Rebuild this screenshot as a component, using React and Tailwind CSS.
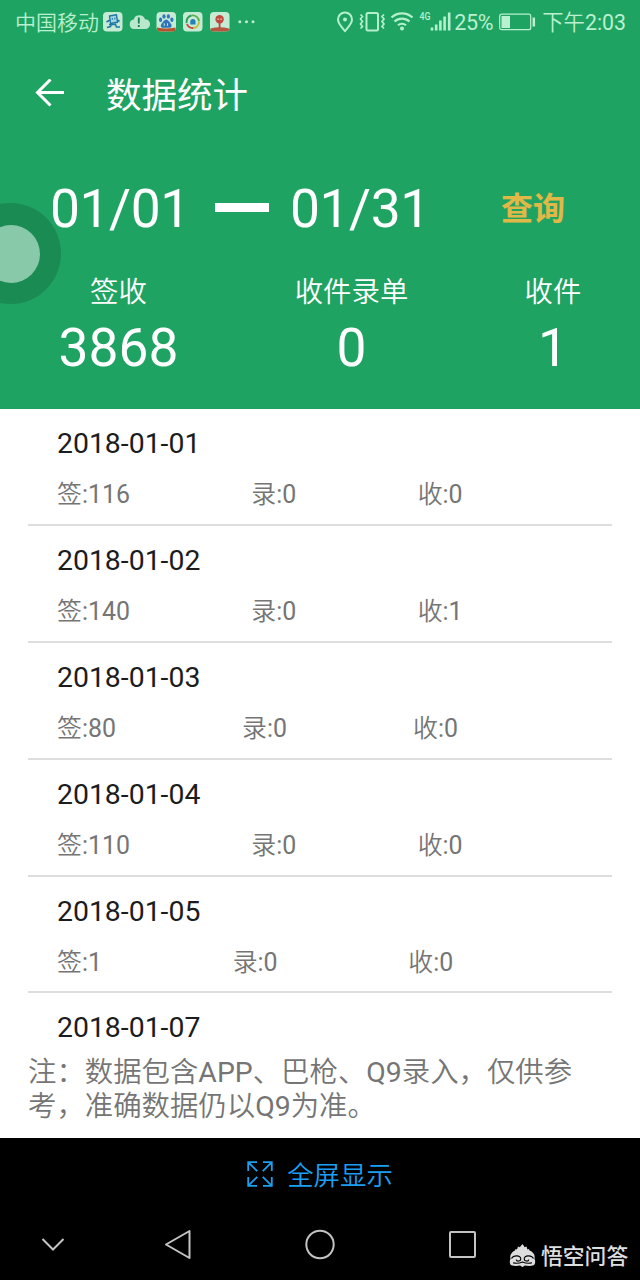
import React from 'react';

const days = [
  { date: '2018-01-01', counts: [116, 0, 0] },
  { date: '2018-01-02', counts: [140, 0, 1] },
  { date: '2018-01-03', counts: [80, 0, 0] },
  { date: '2018-01-04', counts: [110, 0, 0] },
  { date: '2018-01-05', counts: [1, 0, 0] },
  { date: '2018-01-07' },
];

const countLabels = ['签', '录', '收'];

const AppIcons = () => (
  <svg className="ml-[4px] h-[20px] w-[153px] shrink-0" viewBox="0 0 153 20">
    {/* courier */}
    <rect x="0" y="0" width="19.5" height="19.5" rx="4" fill="#c5ebd5" />
    <path d="M6.500 4l7-1.200 1 7.500-7 1.200z" fill="#a5d5de" stroke="#1f78a8" strokeWidth="1.400" strokeLinejoin="round" />
    <path d="M7 8L3.500 10M14.500 8l2 1.500M8.500 11.500l-1 3-3.500 1M12 11.500l1.500 3.500h3.500M6 12.500h7" fill="none" stroke="#1f78a8" strokeWidth="1.600" />
    <path d="M9.300 6v1.800M11.800 5.600v1.800" stroke="#1f78a8" strokeWidth="1" />
    {/* cloud */}
    <path d="M31 17a4.800 4.800 0 0 1-.3-9.500 6 6 0 0 1 11.300-.3 4.900 4.900 0 0 1 .3 9.800z" fill="#b9e8cc" />
    <path d="M35.800 5.500v6M35.800 13v2" stroke="#1a7f55" strokeWidth="1.800" />
    {/* paw */}
    <rect x="53.500" y="0" width="19.500" height="19.500" rx="4" fill="#c5ebd5" />
    <g fill="#2f74bd">
      <ellipse cx="57.600" cy="7.800" rx="1.600" ry="2.200" />
      <ellipse cx="61" cy="4.400" rx="1.600" ry="2.200" />
      <ellipse cx="65.400" cy="4.400" rx="1.600" ry="2.200" />
      <ellipse cx="68.900" cy="7.800" rx="1.600" ry="2.200" />
      <path d="M63.200 7.500c2 0 3 2.500 4.700 4.200 1.600 1.800.5 4-1.500 4h-6.400c-2 0-3-2.200-1.400-4 1.700-1.700 2.600-4.200 4.600-4.200z" />
    </g>
    <path d="M61.300 11.300v2.500M64.500 11.300v2.500" stroke="#c5ebd5" strokeWidth="1" />
    <path d="M54 15.500q9.500 2 18.500 0v1.500q0 2.500-3 2.500h-12.500q-3 0-3-2.500z" fill="#b5512c" />
    {/* ring */}
    <rect x="80" y="0" width="19.500" height="19.500" rx="4" fill="#c5ebd5" />
    <g fill="none" strokeWidth="1.900">
      <path d="M83.600 11a6.300 6.300 0 0 1 5-7.500" stroke="#2c9a52" />
      <path d="M89 3.400a6.300 6.300 0 0 1 7 6" stroke="#5fae4c" />
      <path d="M84 12a6.300 6.300 0 0 0 6.500 4" stroke="#c94a3c" />
      <path d="M96 10a6.300 6.300 0 0 1-5.500 6" stroke="#c9b93c" />
    </g>
    <path d="M87.300 9.500a2.600 2.600 0 0 1 5.200 0v3h-5.200z" fill="#2380b8" />
    {/* map pin */}
    <rect x="107" y="0" width="19.500" height="19.500" rx="4" fill="#c5ebd5" />
    <path d="M107.500 16.500q9-2.500 18.500 0v.5q0 2.500-3 2.500h-12.500q-3 0-3-2.500z" fill="#b5573f" />
    <circle cx="116.600" cy="7.300" r="4.200" fill="#c2483c" />
    <path d="M116.600 11v5" stroke="#b5483c" strokeWidth="1.800" />
    <path d="M114.300 7.300h1.800M117.200 7.300h1.800" stroke="#dba79a" strokeWidth="1.500" />
    <g fill="#c0edd2">
      <circle cx="136.800" cy="9.700" r="1.500" />
      <circle cx="143.500" cy="9.700" r="1.500" />
      <circle cx="150" cy="9.700" r="1.500" />
    </g>
  </svg>
);

const SignalIcons = () => (
  <svg className="h-[24px] w-[116px] shrink-0" viewBox="337 10 116 24" fill="none" stroke="#b5f0cd" strokeWidth="2">
    <path d="M346 31c-3.500-4-7-7.500-7-11.500a7 7 0 0 1 14 0c0 4-3.500 7.500-7 11.500z" />
    <circle cx="346" cy="19.500" r="2" fill="#b5f0cd" stroke="none" />
    <rect x="367.500" y="13" width="11.500" height="17.500" rx="1.500" />
    <path d="M361.500 14.500l2 2-2 2.500 2 2.500-2 2.500 2 2.500-2 2M385 14.500l-2 2 2 2.500-2 2.500 2 2.500-2 2.500 2 2" strokeWidth="1.700" />
    <path d="M392.500 17.500a15.500 15.500 0 0 1 21 0M395.500 21.500a11 11 0 0 1 15 0M399 25.300a6 6 0 0 1 8 0" strokeWidth="2.200" />
    <circle cx="403" cy="28.600" r="2" fill="#b5f0cd" stroke="none" />
    <text x="420.500" y="19.500" fill="#b5f0cd" stroke="none" fontSize="11.500" fontWeight="500" textLength="11" lengthAdjust="spacingAndGlyphs">4G</text>
    <path d="M433 27.500v3M437.200 24.500v6M441.400 20.500v10M445.600 16.500v14M450.200 12.500v18" strokeWidth="2.600" />
  </svg>
);

const StatusBar = () => (
  <div className="flex h-11 items-center justify-between pl-[15px] pr-[14px] text-[#b9f0cf]">
    <div className="flex items-center">
      <span className="w-[84px] whitespace-nowrap pt-0.5 text-[21px] font-[350] leading-6">中国移动</span>
      <AppIcons />
    </div>
    <div className="flex items-center">
      <SignalIcons />
      <span className="ml-[2px] w-[40px] whitespace-nowrap pt-0.5 text-[21.5px] leading-6 tracking-[-0.4px]">25%</span>
      <svg className="ml-[5px] h-[18px] w-[37px]" viewBox="0 0 37 18" fill="none" stroke="#b9f0cf">
        <rect x="0.700" y="1.200" width="31" height="15.500" rx="2" strokeWidth="1.200" />
        <rect x="2.500" y="3" width="8.500" height="12" fill="#b9f0cf" stroke="none" />
        <path d="M34.800 4.500v9" strokeWidth="2.500" />
      </svg>
      <span className="ml-[6px] whitespace-nowrap pt-0.5 text-[21.3px] font-[350] leading-6">下午<span className="font-normal">2:03</span></span>
    </div>
  </div>
);

const Stat = ({ label, value }) => (
  <div className="flex flex-col items-center text-white">
    <span className="text-[28.4px] font-[350] leading-[34px]">{label}</span>
    <span className="mt-[8px] text-[53.3px] leading-[60px]">{value}</span>
  </div>
);

const Header = () => (
  <header className="relative h-[409px] bg-[#1fa362]">
    <StatusBar />
    <div className="flex h-[100px] items-center pl-[35px]">
      <svg className="h-[30px] w-[30px]" viewBox="0 0 30 30" fill="none" stroke="#fff" strokeWidth="3">
        <path d="M29 13.500H3M15.500 .5l-13 13 13 13" />
      </svg>
      <h1 className="ml-[41px] pt-1 text-[35.5px] leading-10 text-white">数据统计</h1>
    </div>
    <div className="mt-[35px] flex h-[60px] items-center pl-[50px] text-[53.3px] leading-[60px] text-white">
      <span className="w-[142px] tracking-[-0.4px]">01/01</span>
      <span className="mb-1 ml-[23px] h-[9px] w-[54px] bg-white" />
      <span className="ml-[21px] w-[142px] tracking-[-0.4px]">01/31</span>
      <button className="ml-[69px] text-[32px] font-bold leading-10 text-[#e0b848]">查询</button>
    </div>
    <div className="mt-[37px] flex">
      <div className="w-[237px]"><Stat label="签收" value="3868" /></div>
      <div className="w-[229px]"><Stat label="收件录单" value="0" /></div>
      <div className="w-[174px]"><Stat label="收件" value="1" /></div>
    </div>
    {/* floating assist button, half docked to the screen edge */}
    <div className="absolute left-0 top-[203px] h-[101px] w-[61px] overflow-hidden">
      <div className="absolute -left-[40px] top-0 flex h-[101px] w-[101px] items-center justify-center rounded-full bg-[#1b8b54]">
        <div className="h-[58px] w-[58px] rounded-full bg-[#87c9a9]" />
      </div>
    </div>
  </header>
);

const DayRow = ({ date, counts }) => (
  <li className="mx-7 h-[116.8px] shrink-0 border-b-2 border-[#dedede] pl-[29px] pr-7 pt-[19px]">
    <div className="text-[28.4px] leading-8 text-[#1c1c1c]">{date}</div>
    {counts && (
      <div className="mt-5 flex text-[24.9px] font-[350] leading-[30px] text-[#757575]">
        {counts.map((n, i) => (
          <span key={i} className="flex-auto">{countLabels[i]}<span className="font-normal">:{n}</span></span>
        ))}
      </div>
    )}
  </li>
);

const NavBar = () => (
  <nav className="relative flex h-[70px] items-center">
    <svg className="ml-[40px] h-8 w-[26px]" viewBox="0 0 26 32" fill="none" stroke="#c4c4c4" strokeWidth="2">
      <path d="M2.500 10L13 20.500 23.500 10" />
    </svg>
    <svg className="ml-[97px] h-8 w-[30px]" viewBox="0 0 30 32" fill="none" stroke="#c4c4c4" strokeWidth="2" strokeLinejoin="round">
      <path d="M26.500 2v27L3 15.500z" />
    </svg>
    <svg className="ml-[111px] h-8 w-8" viewBox="0 0 32 32" fill="none" stroke="#c4c4c4" strokeWidth="2">
      <circle cx="16" cy="15.500" r="13.700" />
    </svg>
    <svg className="ml-[110px] h-8 w-8" viewBox="0 0 32 32" fill="none" stroke="#c4c4c4" strokeWidth="2">
      <rect x="4" y="3" width="25" height="25" rx="1" />
    </svg>
    <div className="absolute left-[509px] top-[33px] flex items-center text-[#dedede]">
      <svg className="h-[24px] w-[27px]" viewBox="0 0 27 24" fill="none">
        <path d="M1.500 15C.5 10.500 3 8 6 6.500l.5-1.500L8 5.500l1-3 1.800.8L13.500 0l2.200 3.300L17.500 2.500l1 3 1.500-.5.5 1.500c3.500 1.500 6 4 5 8.500 1.200 2 .8 5.500-1 6.300-3 1.200-6 .8-8.500.3L13.500 23l-2.500-1.400c-2.500.5-5.500.9-8.500-.3C.7 20.500.300 17 1.500 15z" fill="#dedede" />
        <path d="M2.500 14.500c2-3.800 9.500-3.300 9.300.3 0 2.800-4.300 3-4.600.8M24.500 14.500c-2-3.800-9.500-3.300-9.300.3 0 2.800 4.300 3 4.600.8M4 18.800c3.500 1 6.500.5 9.500-.8 3 1.300 6 1.800 9.500.8" stroke="#000" strokeWidth="1.100" />
      </svg>
      <span className="ml-[5px] whitespace-nowrap pt-0.5 text-[21.8px] font-medium leading-6">悟空问答</span>
    </div>
  </nav>
);

const App = () => (
  <div lang="zh-CN" className="flex h-[1280px] w-[640px] flex-col overflow-hidden bg-white font-['Roboto','Noto_Sans_CJK_SC',sans-serif]">
    <Header />
    <ul className="flex h-[628px] flex-col overflow-hidden pt-[0.4px]">
      {days.map((d) => (
        <DayRow key={d.date} {...d} />
      ))}
    </ul>
    <p className="h-[101px] whitespace-nowrap pl-7 pt-[19px] text-[28.4px] font-[350] leading-[34px] text-[#757575]">
      注：数据包含<span className="font-normal">APP</span>、巴枪、<span className="font-normal">Q9</span>录入，仅供参
      <br />
      考，准确数据仍以<span className="font-normal">Q9</span>为准。
    </p>
    <footer className="h-[142px] bg-black">
      <button className="flex h-[72px] w-full items-center justify-center text-[26.4px] font-[350] leading-8 text-[#1c9ff2]">
        <svg className="mr-[14px] h-[26px] w-[26px]" viewBox="0 0 26 26" fill="none" stroke="#1c9ff2" strokeWidth="1.800">
          <path d="M10 1.200H1.200V10M1.200 1.200l9 9M16 1.200h8.800V10M24.800 1.200l-9 9M10 24.800H1.200V16M1.200 24.800l9-9M16 24.800h8.800V16M24.800 24.800l-9-9" />
        </svg>
        <span className="pt-1">全屏显示</span>
      </button>
      <NavBar />
    </footer>
  </div>
);

export default App;
